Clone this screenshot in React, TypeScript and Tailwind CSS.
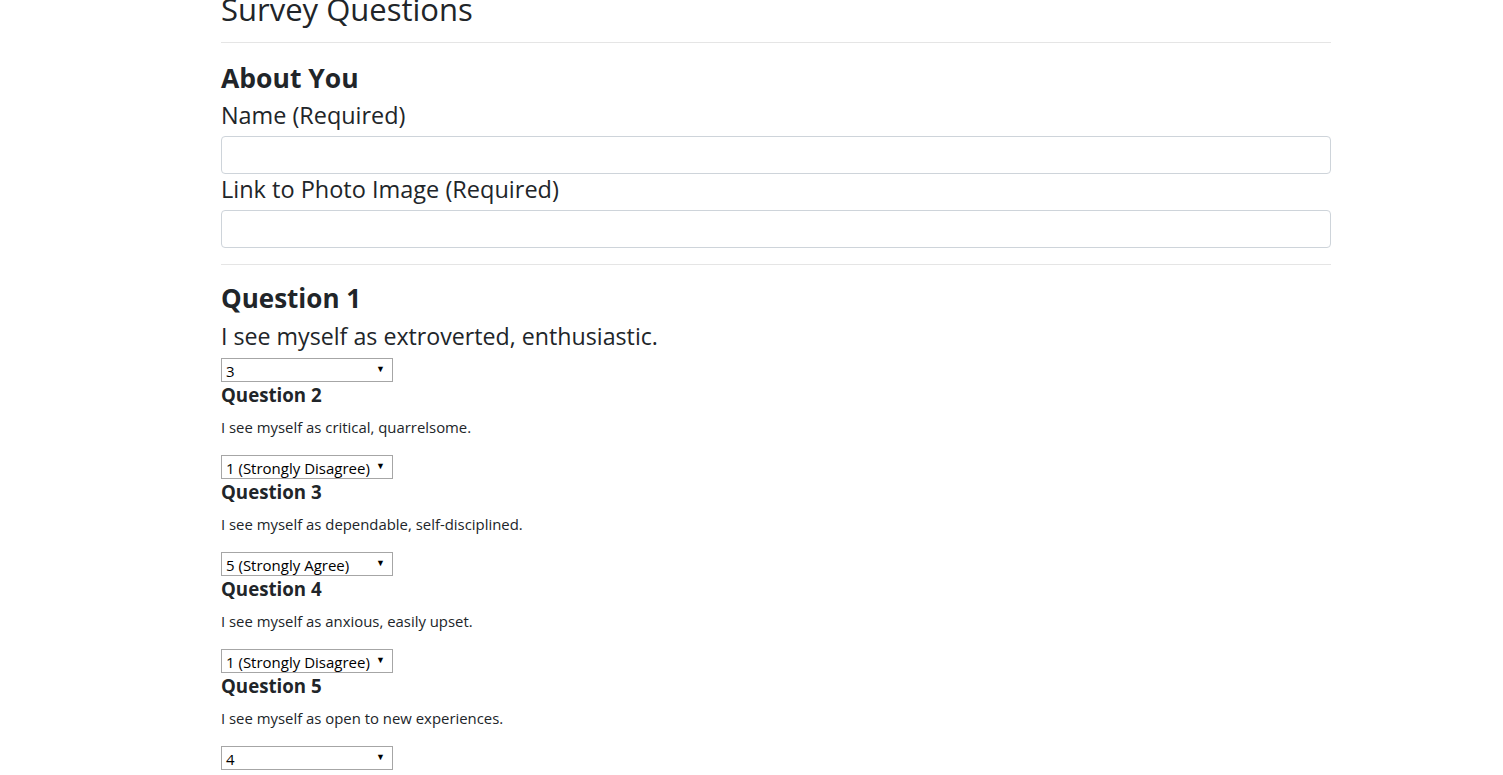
import React from "react";

const font = { fontFamily: '"Open Sans", "Noto Sans", sans-serif' };

function Select({ value }: { value: string }) {
  return (
    <div className="relative h-[24px] w-[172px] border border-[#a6a6a6] bg-white">
      <span className="absolute left-[4px] top-[1px] text-[15px] leading-[22px] text-black">{value}</span>
      <span className="absolute right-[7px] top-[5px] text-[9px] leading-[10px] text-black">▼</span>
    </div>
  );
}

function Question({ n, text, value }: { n: number; text: string; value: string }) {
  return (
    <div className="flex flex-col">
      <h5 className="mt-[1px] h-[24px] text-[18.7px] font-bold leading-[24px]">Question {n}</h5>
      <p className="mt-[8px] h-[24px] text-[14.9px] leading-[24px]">{text}</p>
      <div className="mt-[16px]">
        <Select value={value} />
      </div>
    </div>
  );
}

export default function App() {
  return (
    <div className="min-h-screen overflow-hidden bg-white text-[#212529]" style={font}>
      <div className="ml-[221px] flex w-[1110px] flex-col">
        <h2 className="mt-[-10px] h-[38px] text-[31px] leading-[38px]">Survey Questions</h2>
        <hr className="mt-[14px] border-t border-[#e5e5e5]" />
        <h3 className="mt-[18px] h-[34px] text-[26.5px] font-bold leading-[34px]">About You</h3>
        <label className="mt-[6px] h-[29px] text-[23.4px] leading-[29px]">Name (Required)</label>
        <input className="mt-[6px] h-[38px] w-full rounded-[4px] border border-[#ced4da] bg-white" />
        <label className="mt-[1px] h-[29px] text-[23.5px] leading-[29px]">Link to Photo Image (Required)</label>
        <input className="mt-[6px] h-[38px] w-full rounded-[4px] border border-[#ced4da] bg-white" />
        <hr className="mt-[16px] border-t border-[#e5e5e5]" />
        <h3 className="mt-[16px] h-[34px] text-[26px] font-bold leading-[34px]">Question 1</h3>
        <p className="mt-[7px] h-[29px] text-[23.2px] leading-[29px]">I see myself as extroverted, enthusiastic.</p>
        <div className="mt-[7px]">
          <Select value="3" />
        </div>
        <Question n={2} text="I see myself as critical, quarrelsome." value="1 (Strongly Disagree)" />
        <Question n={3} text="I see myself as dependable, self-disciplined." value="5 (Strongly Agree)" />
        <Question n={4} text="I see myself as anxious, easily upset." value="1 (Strongly Disagree)" />
        <Question n={5} text="I see myself as open to new experiences." value="4" />
      </div>
    </div>
  );
}
